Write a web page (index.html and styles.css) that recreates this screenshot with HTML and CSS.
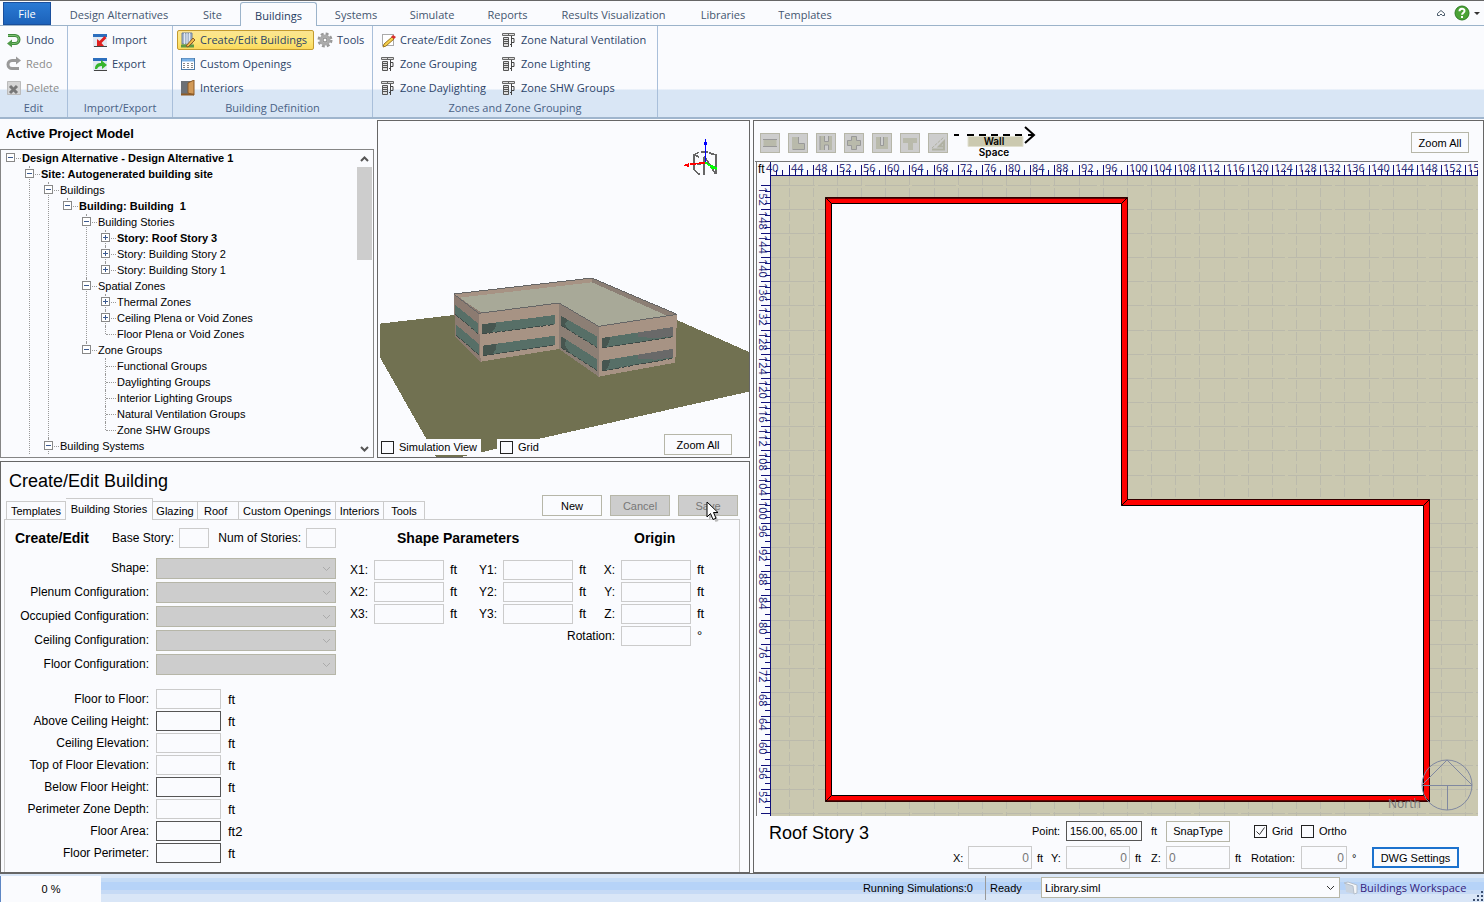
FILE: index.html
```html
<!DOCTYPE html>
<html lang="en">
<head>
<meta charset="utf-8">
<title>Buildings Workspace</title>
<link rel="stylesheet" href="styles.css">
</head>
<body>
<svg class="defs" width="0" height="0" aria-hidden="true">
  <symbol id="zone" viewBox="0 0 16 16">
    <path d="M1.500 1.500h12v2h-12zM7.500 1v3" stroke="#666" fill="#ddd"/>
    <path d="M2.500 5.500h5v9h-5zM2 7.500h6M2 9.500h6M2 11.500h6" stroke="#555" fill="#ddd"/>
    <path d="M10.500 4v11M10 6.500h3v4h-3M9 12.500h2" stroke="#444" fill="none"/>
  </symbol>
</svg>

<nav class="tabs">
  <button class="file">File</button>
  <a href="#" class="w-design">Design Alternatives</a>
  <a href="#" class="w-site">Site</a>
  <a href="#" class="active">Buildings</a>
  <a href="#" class="w-sys">Systems</a>
  <a href="#" class="w-sys">Simulate</a>
  <a href="#" class="w-rep">Reports</a>
  <a href="#" class="w-res">Results Visualization</a>
  <a href="#" class="w-lib">Libraries</a>
  <a href="#" class="w-tem">Templates</a>
  <span class="tab-tools">
    <button aria-label="Collapse ribbon"><svg width="10" height="8"><path d="M1.500 4.500l3.500-3 3.500 3v2h-2l-1.500-1.500-1.500 1.500h-2z" fill="#fff" stroke="#456"/></svg></button>
    <button aria-label="Help"><svg width="16" height="16"><circle cx="8" cy="8" r="7" fill="#4ba336" stroke="#2e7d24"/><path d="M5.500 6.200c0-3.400 5-3.200 5-.3 0 1.800-2.400 1.800-2.400 3.800M8 11v2" stroke="#fff" stroke-width="2" fill="none"/></svg></button>
    <button aria-label="More"><svg width="7" height="5"><path d="M0 1h6l-3 3z" fill="#333"/></svg></button>
  </span>
</nav>

<section class="ribbon">
  <div class="group g-edit">
    <div class="cmds">
      <button><svg width="16" height="16"><path d="M2 3.500h7a4 4 0 0 1 0 8h-5" fill="none" stroke="#3f8a3c" stroke-width="3"/><path d="M2 3.500h7a4 4 0 0 1 0 8h-5" fill="none" stroke="#7fc274"/><path d="M1 11.500l5-4v8z" fill="#4f9a48"/></svg>Undo</button>
      <button class="off"><svg width="16" height="16"><path d="M10 4.500h-4a4 4 0 0 0 0 8h7" fill="none" stroke="#999" stroke-width="3"/><path d="M15 4.500l-5-4v8z" fill="#999"/></svg>Redo</button>
      <button class="off"><svg width="16" height="16"><path d="M1.500 1.500h13v13h-13z" fill="#d5d5d5" stroke="#bbb"/><path d="M4 6l7 7M11 6l-7 7" stroke="#777" stroke-width="3"/></svg>Delete</button>
    </div>
    <h2>Edit</h2>
  </div>
  <div class="group g-import">
    <div class="cmds">
      <button><svg width="16" height="16"><path d="M1 2h14v13h-14z" fill="#e2eaf3"/><path d="M1 2h14v3h-14z" fill="#2c6fbe"/><path d="M2 14.500h13" stroke="#444"/><path d="M5 14v-7l2.500 2 5-5 2 2-5 5 2.500 3z" fill="#e02020"/></svg>Import</button>
      <button><svg width="16" height="16"><path d="M1 2h14v13h-14z" fill="#e2eaf3"/><path d="M1 2h14v3h-14z" fill="#2c6fbe"/><path d="M2 14.500h13" stroke="#444"/><path d="M3 13c0-5 3-6 6-6v-3l6 5-5 4v-3c-3 0-4 1-5 3z" fill="#35b52c"/></svg>Export</button>
    </div>
    <h2>Import/Export</h2>
  </div>
  <div class="group g-def">
    <div class="cmds">
      <button class="on"><svg width="16" height="16"><path d="M2 1h10v11h-10z" fill="#a8b8cc" stroke="#6b7f99"/><path d="M4.500 1v11M7 1v11M9.500 1v11" stroke="#dfe8f2"/><path d="M1 14h13" stroke="#5d9a45" stroke-width="3"/><path d="M6 14l7-8 2 2-7 7z" fill="#f1b94a" stroke="#8a5a24"/></svg>Create/Edit Buildings</button>
      <button><svg width="16" height="16"><rect x="1.500" y="2.500" width="13" height="11" fill="#fff" stroke="#4d7ba8"/><path d="M2 4h12" stroke="#79b1e6" stroke-width="3"/><path d="M3 7.500h10M3 9.500h10M3 11.500h10" stroke="#888" stroke-dasharray="2 2"/></svg>Custom Openings</button>
      <button><svg width="16" height="16"><path d="M1 1h11v13h-11z" fill="#6c7075"/><path d="M8 3l6-3v15l-6-2z" fill="#d29a58" stroke="#8d5b26"/><path d="M1 14.500h13" stroke="#8d5b26" stroke-width="2"/></svg>Interiors</button>
      <button><svg width="16" height="16"><circle cx="8" cy="8" r="6" fill="none" stroke="#999" stroke-width="3" stroke-dasharray="2.700 2"/><circle cx="8" cy="8" r="4" fill="#eee" stroke="#aaa" stroke-width="3"/><circle cx="8" cy="8" r="2" fill="#fff" stroke="#777"/></svg>Tools</button>
    </div>
    <h2>Building Definition</h2>
  </div>
  <div class="group g-zones">
    <div class="cmds">
      <button><svg width="16" height="16"><rect x="2.500" y="2.500" width="11" height="11" fill="#fff" stroke="#aaa"/><path d="M4 12l8-7 2 2-8 7-3 1z" fill="#f5cf4a" stroke="#9a7422"/><path d="M11 5l2-2 3 2-2 2z" fill="#d83030"/></svg>Create/Edit Zones</button>
      <button><svg width="16" height="16"><use href="#zone"/></svg>Zone Grouping</button>
      <button><svg width="16" height="16"><use href="#zone"/></svg>Zone Daylighting</button>
      <button><svg width="16" height="16"><use href="#zone"/></svg>Zone Natural Ventilation</button>
      <button><svg width="16" height="16"><use href="#zone"/></svg>Zone Lighting</button>
      <button><svg width="16" height="16"><use href="#zone"/></svg>Zone SHW Groups</button>
    </div>
    <h2>Zones and Zone Grouping</h2>
  </div>
</section>

<main>
  <div class="left">
    <div class="upper">
      <section class="model">
        <h1>Active Project Model</h1>
        <div class="treebox">
          <ul class="tree">
            <li class="root"><button class="tw" aria-label="Collapse"></button><b>Design Alternative - Design Alternative 1</b>
              <ul>
                <li class="more"><button class="tw" aria-label="Collapse"></button><b>Site: Autogenerated building site</b>
                  <ul>
                    <li class="more"><button class="tw" aria-label="Collapse"></button>Buildings
                      <ul>
                        <li><button class="tw" aria-label="Collapse"></button><b>Building: Building&nbsp; 1</b>
                          <ul>
                            <li class="more"><button class="tw" aria-label="Collapse"></button>Building Stories
                              <ul>
                                <li class="more"><button class="tw plus" aria-label="Expand"></button><b>Story: Roof Story 3</b></li>
                                <li class="more"><button class="tw plus" aria-label="Expand"></button>Story: Building Story 2</li>
                                <li><button class="tw plus" aria-label="Expand"></button>Story: Building Story 1</li>
                              </ul>
                            </li>
                            <li class="more"><button class="tw" aria-label="Collapse"></button>Spatial Zones
                              <ul>
                                <li class="more"><button class="tw plus" aria-label="Expand"></button>Thermal Zones</li>
                                <li class="more"><button class="tw plus" aria-label="Expand"></button>Ceiling Plena or Void Zones</li>
                                <li>Floor Plena or Void Zones</li>
                              </ul>
                            </li>
                            <li><button class="tw" aria-label="Collapse"></button>Zone Groups
                              <ul>
                                <li class="more">Functional Groups</li>
                                <li class="more">Daylighting Groups</li>
                                <li class="more">Interior Lighting Groups</li>
                                <li class="more">Natural Ventilation Groups</li>
                                <li>Zone SHW Groups</li>
                              </ul>
                            </li>
                          </ul>
                        </li>
                      </ul>
                    </li>
                    <li class="more"><button class="tw" aria-label="Collapse"></button>Building Systems</li>
                  </ul>
                </li>
              </ul>
            </li>
          </ul>
          <div class="scroll">
            <svg width="9" height="6"><path d="M1 5l3.500-3.500 3.500 3.500" fill="none" stroke="#555" stroke-width="2"/></svg>
            <span class="thumb"></span>
            <svg width="9" height="6"><path d="M1 1l3.500 3.500 3.500-3.500" fill="none" stroke="#555" stroke-width="2"/></svg>
          </div>
        </div>
      </section>

      <section class="view3d">
        <svg class="scene" role="img" aria-label="Building in 3D">
          <g transform="translate(-2 -1) scale(.33333)" shape-rendering="crispEdges">
            <path d="M12 611L235 585 648 540 903 600 1128 700V813L495 955 255 1011H180L150 955 12 712z" fill="#717151"/>
            <path d="M233 522L308 580 314 725 238 650z" fill="#8c7b71"/>
            <path d="M308 580L549 549V687L314 725z" fill="#a79384"/>
            <path d="M549 549L668 619V770L549 687z" fill="#8c7f75"/>
            <path d="M668 619L903 583 898 728 668 770z" fill="#a79384"/>
            <path d="M233 522L648 474 903 583 668 619 549 549 308 580z" fill="#a8a998"/>
            <path d="M233 522L648 474V487L250 533z" fill="#a79384"/>
            <path d="M648 474L903 583 875 588 648 487z" fill="#8c7f75"/>
            <path d="M233 522L250 533 318 579 308 580z" fill="#8c7b71"/>
            <g fill="#576f67">
              <path d="M238 555L306 610V641L238 583z"/><path d="M240 614L308 671V704L240 645z"/>
              <path d="M318 613L538 585V613L318 642z"/><path d="M320 677L538 647V675L320 708z"/>
              <path d="M554 587L664 650V683L554 615z"/><path d="M554 648L664 718V752L554 682z"/>
              <path d="M678 654L892 621V650L678 684z"/><path d="M678 722L890 687V715L678 753z"/>
            </g>
            <g fill="#475650">
              <path d="M318 613L362 608 358 624 345 639 318 642z"/><path d="M320 677L362 672 360 688 348 704 320 708z"/>
              <path d="M554 587L578 601 566 613 580 631 554 615z"/><path d="M554 648L572 660 565 672 580 698 554 682z"/>
              <path d="M678 654L702 650 700 664 690 682 678 684z"/><path d="M678 722L702 719 700 733 690 751 678 753z"/>
            </g>
            <g fill="#696969">
              <path d="M785 638L892 621V648L840 655 785 650z"/><path d="M785 704L890 687V712L840 719 785 716z"/>
            </g>
            <path d="M233 522L648 474 903 583 668 619 549 549 308 580z" fill="none" stroke="#666" stroke-width="3"/>
            <path d="M238 583L306 641M240 645L308 704M318 642L538 613M320 708L538 675M554 615L664 683M554 682L664 752M678 684L892 650M678 753L890 715" stroke="#3d4946" stroke-width="3" stroke-dasharray="14 6"/>
            <path d="M971 164L955 150V104L968 97M958 104l10 8M976 97h20M1000 99l20 6v56M985 164V110M985 108l32 52M960 130l14 4" fill="none" stroke="#666" stroke-width="5"/>
            <path d="M988 57v70" stroke="#00f" stroke-width="3"/><path d="M984 66h9v9h-9z" fill="#00f"/>
            <path d="M988 128l-45 5" stroke="red" stroke-width="5"/><path d="M921 136l18-7v12z" fill="red"/>
            <path d="M988 128l20 12" stroke="#0f0" stroke-width="5"/><path d="M1004 134l18 7v8l-18-3z" fill="#0f0"/>
          </g>
        </svg>
        <div class="viewbar">
          <label class="chk simv"><input type="checkbox">Simulation View</label>
          <label class="chk"><input type="checkbox">Grid</label>
          <button class="btn zoom3d">Zoom All</button>
        </div>
      </section>
    </div>

    <section class="editor">
      <div class="edhead">
        <h1>Create/Edit Building</h1>
        <div class="pagetabs">
          <button>Templates</button><button class="cur">Building Stories</button><button>Glazing</button><button class="start">Roof</button><button>Custom Openings</button><button>Interiors</button><button>Tools</button>
        </div>
        <div class="actions">
          <button class="btn">New</button>
          <button class="btn" disabled>Cancel</button>
          <button class="btn save" disabled>Save<svg class="pointer" width="14" height="21"><path d="M3 3v16l4-4 2.500 6 3-1-2.500-5.500h4z" fill="#bbb"/><path d="M1 1v15l3.500-3.500 2.500 6 3-1.300-2.500-5.700h4.500z" fill="#fff" stroke="#000"/></svg></button>
        </div>
      </div>
      <form class="page">
        <div class="col-a">
          <div class="top"><h2>Create/Edit</h2><label for="base">Base Story:</label><input id="base" class="light"><label for="num">Num of Stories:</label><input id="num" class="light"></div>
          <div class="configs">
            <label for="c1">Shape:</label><select id="c1" disabled></select>
            <label for="c2">Plenum Configuration:</label><select id="c2" disabled></select>
            <label for="c3">Occupied Configuration:</label><select id="c3" disabled></select>
            <label for="c4">Ceiling Configuration:</label><select id="c4" disabled></select>
            <label for="c5">Floor Configuration:</label><select id="c5" disabled></select>
          </div>
          <div class="dims">
            <label for="d1">Floor to Floor:</label><input id="d1" class="light"><span>ft</span>
            <label for="d2">Above Ceiling Height:</label><input id="d2"><span>ft</span>
            <label for="d3">Ceiling Elevation:</label><input id="d3" class="light"><span>ft</span>
            <label for="d4">Top of Floor Elevation:</label><input id="d4" class="light"><span>ft</span>
            <label for="d5">Below Floor Height:</label><input id="d5"><span>ft</span>
            <label for="d6">Perimeter Zone Depth:</label><input id="d6" class="light"><span>ft</span>
            <label for="d7">Floor Area:</label><input id="d7"><span>ft2</span>
            <label for="d8">Floor Perimeter:</label><input id="d8"><span>ft</span>
          </div>
        </div>
        <div class="col-b">
          <h2>Shape Parameters</h2>
          <div class="shape">
            <label for="x1">X1:</label><input id="x1" class="light"><span>ft</span><label for="y1">Y1:</label><input id="y1" class="light"><span>ft</span>
            <label for="x2">X2:</label><input id="x2" class="light"><span>ft</span><label for="y2">Y2:</label><input id="y2" class="light"><span>ft</span>
            <label for="x3">X3:</label><input id="x3" class="light"><span>ft</span><label for="y3">Y3:</label><input id="y3" class="light"><span>ft</span>
          </div>
        </div>
        <div class="col-c">
          <h2>Origin</h2>
          <div class="origin">
            <label for="ox">X:</label><input id="ox" class="light"><span>ft</span>
            <label for="oy">Y:</label><input id="oy" class="light"><span>ft</span>
            <label for="oz">Z:</label><input id="oz" class="light"><span>ft</span>
            <label for="or">Rotation:</label><input id="or" class="light"><span>°</span>
          </div>
        </div>
      </form>
    </section>
  </div>

  <section class="plan">
    <div class="toolbar">
      <button aria-label="Rectangle"><svg width="18" height="18"><path d="M2.500 5.500h13v7h-13z" fill="#b9baab"/><path d="M2 5.500h14M2 12.500h14" stroke="#999"/></svg></button>
      <button aria-label="L shape"><svg width="18" height="18"><path d="M3 3h6v6h6v6h-12z" fill="#b9baab"/><path d="M9.500 3v6.500h6v6h-12" stroke="#999" fill="none"/></svg></button>
      <button aria-label="H shape"><svg width="18" height="18"><path d="M3 2h4v5h4v-5h4v14h-4v-5h-4v5h-4z" fill="#b9baab"/><path d="M7.500 2v5.500h4v-5.500M7.500 16v-5h4v5M3 2v14" stroke="#999" fill="none"/></svg></button>
      <button aria-label="Cross shape"><svg width="18" height="18"><path d="M6.500 2.500h5v4h4v5h-4v4h-5v-4h-4v-5h4z" fill="#b9baab" stroke="#999"/></svg></button>
      <button aria-label="U shape"><svg width="18" height="18"><path d="M3 3h4v8h4v-8h4v12h-12z" fill="#b9baab"/><path d="M7.500 3v8.500h3v-8.500" stroke="#999" fill="none"/></svg></button>
      <button aria-label="T shape"><svg width="18" height="18"><path d="M2 4h14v5h-4v7h-5v-7h-5z" fill="#b9baab"/></svg></button>
      <button aria-label="Custom shape"><svg width="18" height="18"><path d="M3 14l12-11" stroke="#b0b1a3" stroke-dasharray="3 1"/><path d="M3 15.500h12v-8l-5 5h4" stroke="#b0b1a3" fill="none" stroke-width="2"/></svg></button>
      <svg class="wall" width="84" height="36">
        <path d="M14 12h55v9h-55z" fill="#cbc9b0"/>
        <path d="M14 11.500h55v10h-55z" fill="none" stroke="#e0dfd0"/>
        <path d="M0 10h5M13 10h58" stroke="#000" stroke-width="2" stroke-dasharray="7 5"/>
        <path d="M71 2l9 8-9 8M74 10h6" stroke="#000" stroke-width="2" fill="none"/>
        <text x="40" y="20" text-anchor="middle">Wall</text><text x="40" y="31" text-anchor="middle">Space</text>
      </svg>
      <button class="btn zoom">Zoom All</button>
    </div>
    <svg class="canvas" role="img" aria-label="Floor plan of Roof Story 3">
      <rect width="100%" height="100%" fill="#cac8b0"/>
      <g id="grid"></g>
      <path d="M70.500 36.500H372.500V338.500H674.500V640.500H70.500z" fill="red" stroke="#300"/>
      <path d="M71 37.500H372M71 639.500H674" stroke="#600" fill="none"/>
      <path d="M76.500 42.500H366.500V344.500H668.500V634.500H76.500z" fill="#fafbfe" stroke="#000"/>
      <path d="M70.500 36.500l6 6M372.500 36.500l-6 6M372.500 338.500l-6 6M674.500 338.500l-6 6M674.500 640.500l-6-6M70.500 640.500l6-6" stroke="#000"/>
      <g fill="none" stroke="#8088a0"><circle cx="692" cy="624" r="25"/><path d="M667 624.500h50M692.500 624v25M667 624l25-25 25 25"/></g>
      <text class="north" x="633" y="647">North</text>
      <rect width="100%" height="15" fill="#fafbfe"/><rect width="16" height="100%" fill="#fafbfe"/>
      <g id="ruler"></g>
      <path d="M16 14.500H2000M15.500 0V2000" stroke="#10107a"/>
      <path d="M0 .5H2000M1.500 0V2000" stroke="#777"/>
      <text class="unit" x="3" y="12">ft</text>
    </svg>
    <div class="foot">
      <h1>Roof Story 3</h1>
      <div class="fields">
        <label class="point" for="pt">Point:</label><input id="pt" class="pt" value="156.00, 65.00"><span>ft</span><button class="btn snap">SnapType</button>
        <label class="chk gridchk"><input type="checkbox" checked>Grid</label><label class="chk ortho"><input type="checkbox">Ortho</label>
        <label for="px" class="first">X:</label><input id="px" class="num" value="0"><span class="u">ft</span>
        <label for="py">Y:</label><input id="py" class="num" value="0"><span class="u">ft</span>
        <label for="pz">Z:</label><input id="pz" class="num lft" value="0"><span class="u">ft</span>
        <label for="pr">Rotation:</label><input id="pr" class="num" value="0"><span class="u">°</span>
        <button class="btn dwg">DWG Settings</button>
      </div>
    </div>
  </section>
</main>

<footer>
  <span class="progress">0 %</span>
  <span class="sims">Running Simulations:0</span>
  <span class="ready">Ready</span>
  <select class="lib" aria-label="Library"><option>Library.siml</option></select>
  <span class="ws"><svg width="16" height="14"><path d="M2 2l10 2v9l-9-2z" fill="#c9d3df"/><path d="M1 2l4-1 9 3v8l-3 1-1-8z" fill="#f4f6f8" stroke="#b5bfcb"/></svg>Buildings Workspace</span>
  <svg class="grip" width="12" height="12"><path d="M9 1h2v2h-2zM9 5h2v2h-2zM5 5h2v2h-2zM9 9h2v2h-2zM5 9h2v2h-2zM1 9h2v2h-2z" fill="#3c4f70"/></svg>
</footer>
<script src="plan.js"></script>
</body>
</html>
```

FILE: styles.css
```css
* { box-sizing: border-box; }
body {
  margin: 0; min-height: 100vh; display: flex; flex-direction: column;
  background: #fafbfe; color: #000; border-top: 1px solid #666;
  font: 11px/16px "Liberation Sans", Arial, sans-serif;
}
h1, h2 { margin: 0; font-weight: normal; }
button, input, select { font: inherit; color: inherit; margin: 0; padding: 0; }
button { background: none; border: 0; white-space: nowrap; }
.defs { position: absolute; }

/* Ribbon tabs */
.tabs, .ribbon, .ws { font-family: "Open Sans", "Noto Sans", sans-serif; color: #2c4468; }
.tabs { display: flex; height: 25px; padding-left: 3px; border-bottom: 1px solid #9bb3ca; }
.tabs a { color: #44566f; text-decoration: none; text-align: center; line-height: 28px; white-space: nowrap; }
.tabs .file { width: 48px; margin-top: 1px; background: linear-gradient(#2a7ad4, #1c62ba); color: #fff; border: 1px solid #1a4f9c; }
.w-design { width: 136px; }
.w-site { width: 51px; }
.w-sys { width: 76px; }
.w-rep { width: 75px; }
.w-res { width: 137px; }
.w-lib { width: 82px; }
.w-tem { width: 82px; }
.tabs a.active { width: 77px; margin: 1px 1px -1px 2px; line-height: 26px; background: #fafbfe; border: 1px solid #9bb3ca; border-bottom: 0; border-radius: 3px 3px 0 0; color: #1f3a60; }
.tab-tools { margin-left: auto; display: flex; gap: 8px; align-items: center; padding-right: 3px; }
.tab-tools button { display: flex; }
.tab-tools button:last-child { margin-left: -4px; }

/* Ribbon */
.ribbon { display: flex; height: 93px; background: linear-gradient(#fafbfe 63px, #d9e6f5 64px); border-bottom: 2px solid #9fb5cd; }
.group { display: flex; flex-direction: column; padding-top: 2px; border-right: 1px solid #a9bfda; }
.g-edit { width: 68px; }
.g-import { width: 105px; }
.g-def { width: 200px; }
.g-zones { width: 285px; }
.cmds { display: grid; grid-auto-flow: column; grid-template-rows: repeat(3, 24px); justify-content: start; align-items: center; }
.g-edit .cmds { padding-left: 3px; }
.g-import .cmds { padding-left: 21px; }
.g-def .cmds { padding-left: 4px; grid-template-columns: 137px auto; }
.g-zones .cmds { padding-left: 4px; grid-template-columns: 121px auto; }
.cmds button { display: flex; align-items: center; gap: 4px; height: 20px; padding: 0 2px; border: 1px solid transparent; }
.cmds svg { flex: none; }
.cmds .on { background: linear-gradient(#fbe491, #fde77c 50%, #fbd95c); border-color: #c39b2e; border-radius: 2px; }
.cmds .off { color: #8b8b8b; }
.group h2 { font-size: 11px; line-height: 16px; text-align: center; color: #4a6285; }

main { flex: 1; display: grid; grid-template-columns: minmax(0, 750fr) minmax(0, 731fr); gap: 3px; padding-top: 1px; }
.left { display: flex; flex-direction: column; gap: 3px; }
.upper { display: grid; grid-template-columns: minmax(0, 375fr) minmax(0, 373fr); gap: 2px; height: 338px; }

/* Project tree */
.model { display: flex; flex-direction: column; min-height: 0; }
.model h1 { font-size: 13px; font-weight: bold; line-height: 28px; padding: 0 0 1px 6px; }
.treebox { flex: 1; min-height: 0; display: flex; border: 1px solid #858585; margin-right: 1px; overflow: hidden; }
.tree { flex: 1; }
.tree, .tree ul { list-style: none; margin: 0; padding: 0; }
.tree li { position: relative; padding-left: 21px; white-space: nowrap; line-height: 16px; }
.tree ul { margin-left: -2px; }
.tree li::before { content: ""; position: absolute; left: 9px; top: 0; height: 8px; border-left: 1px dotted #999; }
.tree li.more::before { height: 100%; }
.tree li.root::before { display: none; }
.tree li::after { content: ""; position: absolute; left: 10px; top: 8px; width: 10px; border-top: 1px dotted #999; }
.tw { position: absolute; z-index: 1; left: 5px; top: 3px; width: 9px; height: 9px; border: 1px solid #888; background: linear-gradient(#3c5a90, #3c5a90) center / 5px 1px no-repeat #fff; }
.tw.plus { background: linear-gradient(#3c5a90, #3c5a90) center / 5px 1px no-repeat, linear-gradient(#3c5a90, #3c5a90) center / 1px 5px no-repeat, #fff; }
.scroll { width: 17px; display: flex; flex-direction: column; align-items: center; padding: 6px 0 5px; }
.thumb { width: 15px; height: 93px; background: #cdcdcd; margin: 5px 0 auto; }

/* 3D view */
.view3d { position: relative; border: 1px solid #666; overflow: hidden; }
.scene { display: block; width: 100%; height: 100%; }
.viewbar { position: absolute; left: 0; right: 0; bottom: 0; display: flex; align-items: flex-end; padding: 0 17px 2px 0; }
.chk { display: flex; align-items: center; gap: 5px; white-space: nowrap; }
.chk input { appearance: none; width: 13px; height: 13px; border: 1px solid #222; background: #fafbfe; }
.chk input:checked { background: url("data:image/svg+xml,%3Csvg xmlns='http://www.w3.org/2000/svg' width='11' height='11'%3E%3Cpath d='M1.500 5.500l3 3 5-7' fill='none' stroke='%23333'/%3E%3C/svg%3E") center no-repeat; }
.viewbar .chk { background: #fafbfe; padding-left: 3px; line-height: 16px; }
.simv { width: 103px; margin-right: 16px; }
.btn { height: 21px; border: 1px solid #b6b6a8; background: #fafbfe; text-align: center; }
.zoom3d { margin-left: auto; width: 68px; }
.btn:disabled { background: #cdcdcd; color: #777; }

/* Building editor */
.editor { flex: 1; display: flex; flex-direction: column; border: 1px solid #666; padding-left: 3px; }
.edhead { display: grid; grid-template-columns: auto 1fr; grid-template-rows: 36px 21px; padding-right: 11px; }
.edhead h1 { grid-column: 1 / -1; font-size: 18px; line-height: 38px; padding-left: 5px; }
.pagetabs { display: grid; grid-template-columns: 60px 87px 45px 41px 97px 48px 41px; align-items: end; padding-left: 2px; height: 22px; position: relative; z-index: 1; }
.pagetabs button { height: 19px; border: 1px solid #cbcbcb; border-left: 0; }
.pagetabs button:first-child { border-left: 1px solid #cbcbcb; }
.pagetabs .cur { height: 22px; background: #fafbfe; border-bottom: 0; padding-bottom: 2px; }
.pagetabs .start { text-align: left; padding-left: 6px; }
.actions { display: flex; justify-content: flex-end; gap: 8px; margin: -3px 0 3px; }
.actions .btn { width: 60px; }
.save { position: relative; }
.pointer { position: absolute; left: 27px; top: 5px; }
.page { flex: 1; display: flex; margin-right: 9px; border: 1px solid #cbcbcb; border-bottom: 0; padding: 8px 30px 9px 0; font-size: 12px; line-height: 20px; }
.page h2 { font-weight: bold; font-size: 14px; line-height: 20px; }
.page input { width: 100%; height: 20px; background: #fafbfe; border: 1px solid #555; }
.page input.light { border-color: #cbcbcb; }
.page label { text-align: right; white-space: nowrap; }
.page span { font-size: 13px; }
.page select { height: 21px; appearance: none; opacity: 1; border: 1px solid #b6b6a8; border-radius: 0; background: url("data:image/svg+xml,%3Csvg xmlns='http://www.w3.org/2000/svg' width='9' height='6'%3E%3Cpath d='M1 1l3.500 3.500 3.500-3.500' fill='none' stroke='%23aaa'/%3E%3C/svg%3E") right 4px center no-repeat #cdcdcd; }
.col-a { width: 331px; }
.top { display: grid; grid-template-columns: 92px 62px 30px 87px 30px; column-gap: 5px; padding-left: 10px; }
.configs { display: grid; grid-template-columns: 144px 180px; gap: 3px 7px; margin-top: 10px; }
.dims { display: grid; grid-template-columns: 144px 65px auto; gap: 2px 7px; margin-top: 14px; justify-content: start; }
.dims span { line-height: 22px; height: 20px; }
.col-b { padding-left: 14px; }
.col-b h2 { padding-left: 47px; }
.shape { display: grid; grid-template-columns: 18px 70px 23px 18px 70px 12px; gap: 2px 6px; margin-top: 12px; }
.col-c { margin-left: auto; }
.col-c h2 { padding-left: 29px; }
.origin { display: grid; grid-template-columns: 10px 70px 12px; gap: 2px 6px; margin-top: 12px; }
.origin label { justify-self: end; }

/* Floor plan */
.plan { display: flex; flex-direction: column; border: 1px solid #666; min-width: 0; }
.toolbar { display: flex; align-items: center; gap: 8px; height: 40px; padding: 3px 14px 0 6px; }
.toolbar > button:not(.btn) { width: 20px; height: 20px; border: 1px solid #b6b6a8; background: #cdcdcd; display: flex; }
.wall { font: 600 10px Inter, sans-serif; margin-left: -2px; }
.zoom { margin-left: auto; width: 58px; }
.canvas { flex: 1; min-height: 400px; width: auto; margin: 0 5px 0 1px; display: block; }
.canvas text { font: 11px "Noto Sans", sans-serif; fill: #33337c; }
.canvas .unit { font: 12px "Liberation Sans", sans-serif; fill: #000; }
.canvas .north { font: 12px "Open Sans", sans-serif; fill: #777; }
.foot { display: flex; justify-content: space-between; padding: 5px 24px 3px 15px; }
.foot h1 { font-size: 18px; line-height: 25px; }
.fields { display: grid; grid-template-columns: 15px 64px 19px 15px 64px 21px 15px 64px 21px 50px 46px 25px 87px; grid-template-rows: 20px 23px; row-gap: 5px; align-items: center; white-space: nowrap; }
.point { grid-column: 3 / 5; text-align: right; padding-right: 8px; }
.pt { grid-column: 5 / 7; width: 76px; height: 20px; border: 1px solid #555; padding-left: 3px; background: #fafbfe; }
.snap { grid-column: 8; }
.gridchk { grid-column: 10; padding-left: 3px; }
.ortho { grid-column: 11 / 13; }
.first { grid-column: 1; }
.num { width: 100%; height: 23px; border: 1px solid #cbcbcb; background: #fafbfe; color: #777; text-align: right; padding: 0 2px; font-size: 12px; }
.lft { text-align: left; }
.u { padding-left: 5px; }
.dwg { border: 2px solid #1c72ce; }

/* Status bar */
footer { display: flex; align-items: center; height: 29px; border-top: 1px solid #666; background: linear-gradient(#d9e6f7 0 4px, #c4dbf6 4px 8px, #b6d3f8 8px 16px, #c6daf5 16px 20px, #d9e6f7 20px); }
.progress { width: 101px; height: 26px; align-self: flex-end; line-height: 26px; background: #fafbfe; text-align: center; border-left: 1px solid #5d86c4; }
.sims { margin-left: auto; padding-right: 12px; border-right: 1px solid #999; line-height: 24px; }
.ready { width: 55px; padding-left: 4px; }
.lib { width: 299px; height: 21px; align-self: flex-start; margin-top: 3px; appearance: none; border: 1px solid #b6b6a8; border-radius: 0; padding-left: 3px; background: url("data:image/svg+xml,%3Csvg xmlns='http://www.w3.org/2000/svg' width='9' height='6'%3E%3Cpath d='M1 1l3.500 3.500 3.500-3.500' fill='none' stroke='%23333'/%3E%3C/svg%3E") right 4px center no-repeat #fafbfe; }
.ws { display: flex; align-items: center; gap: 1px; padding-left: 3px; width: 132px; color: #35207a; white-space: nowrap; }
.grip { align-self: flex-end; }
```

FILE: plan.js
```js
// Draws the grid and both rulers of the floor plan; STEP is four feet in pixels.
const STEP = 24.17;
const NS = "http://www.w3.org/2000/svg";
const grid = document.getElementById("grid");
const ruler = document.getElementById("ruler");

function add(parent, tag, attrs, text) {
  const el = document.createElementNS(NS, tag);
  for (const key in attrs) el.setAttribute(key, attrs[key]);
  if (text) el.textContent = text;
  parent.appendChild(el);
}

const crisp = v => Math.round(v) + 0.5;

for (let i = -1; i < 29; i++) {
  const x = 33.5 + i * STEP;
  if (x > 16) add(grid, "path", { d: `M${crisp(x)} 15V655`, stroke: "#bbbaac", "stroke-dasharray": "9 3" });
  add(ruler, "text", { x: Math.round(x) + 2, y: 11 }, String(44 + 4 * i));
  for (let k = 0; k < 4; k++) {
    const t = x + k * STEP / 4;
    if (t > 16) add(ruler, "path", { d: `M${crisp(t)} ${k ? 9 : 4}V14`, stroke: "#10107a" });
  }
}
for (let i = 0; i < 27; i++) {
  const y = 23.5 + i * STEP;
  add(grid, "path", { d: `M16 ${crisp(y)}H723`, stroke: "#bbbaac", "stroke-dasharray": "44 3" });
  if (i < 26) add(ruler, "text", { transform: `translate(4 ${Math.round(y) + 2}) rotate(90)` }, String(152 - 4 * i));
  for (let k = 0; k < 4; k++) {
    const t = y + k * STEP / 4;
    if (t < 655) add(ruler, "path", { d: `M${k ? 10 : 6} ${crisp(t)}H15`, stroke: "#10107a" });
  }
}
```
